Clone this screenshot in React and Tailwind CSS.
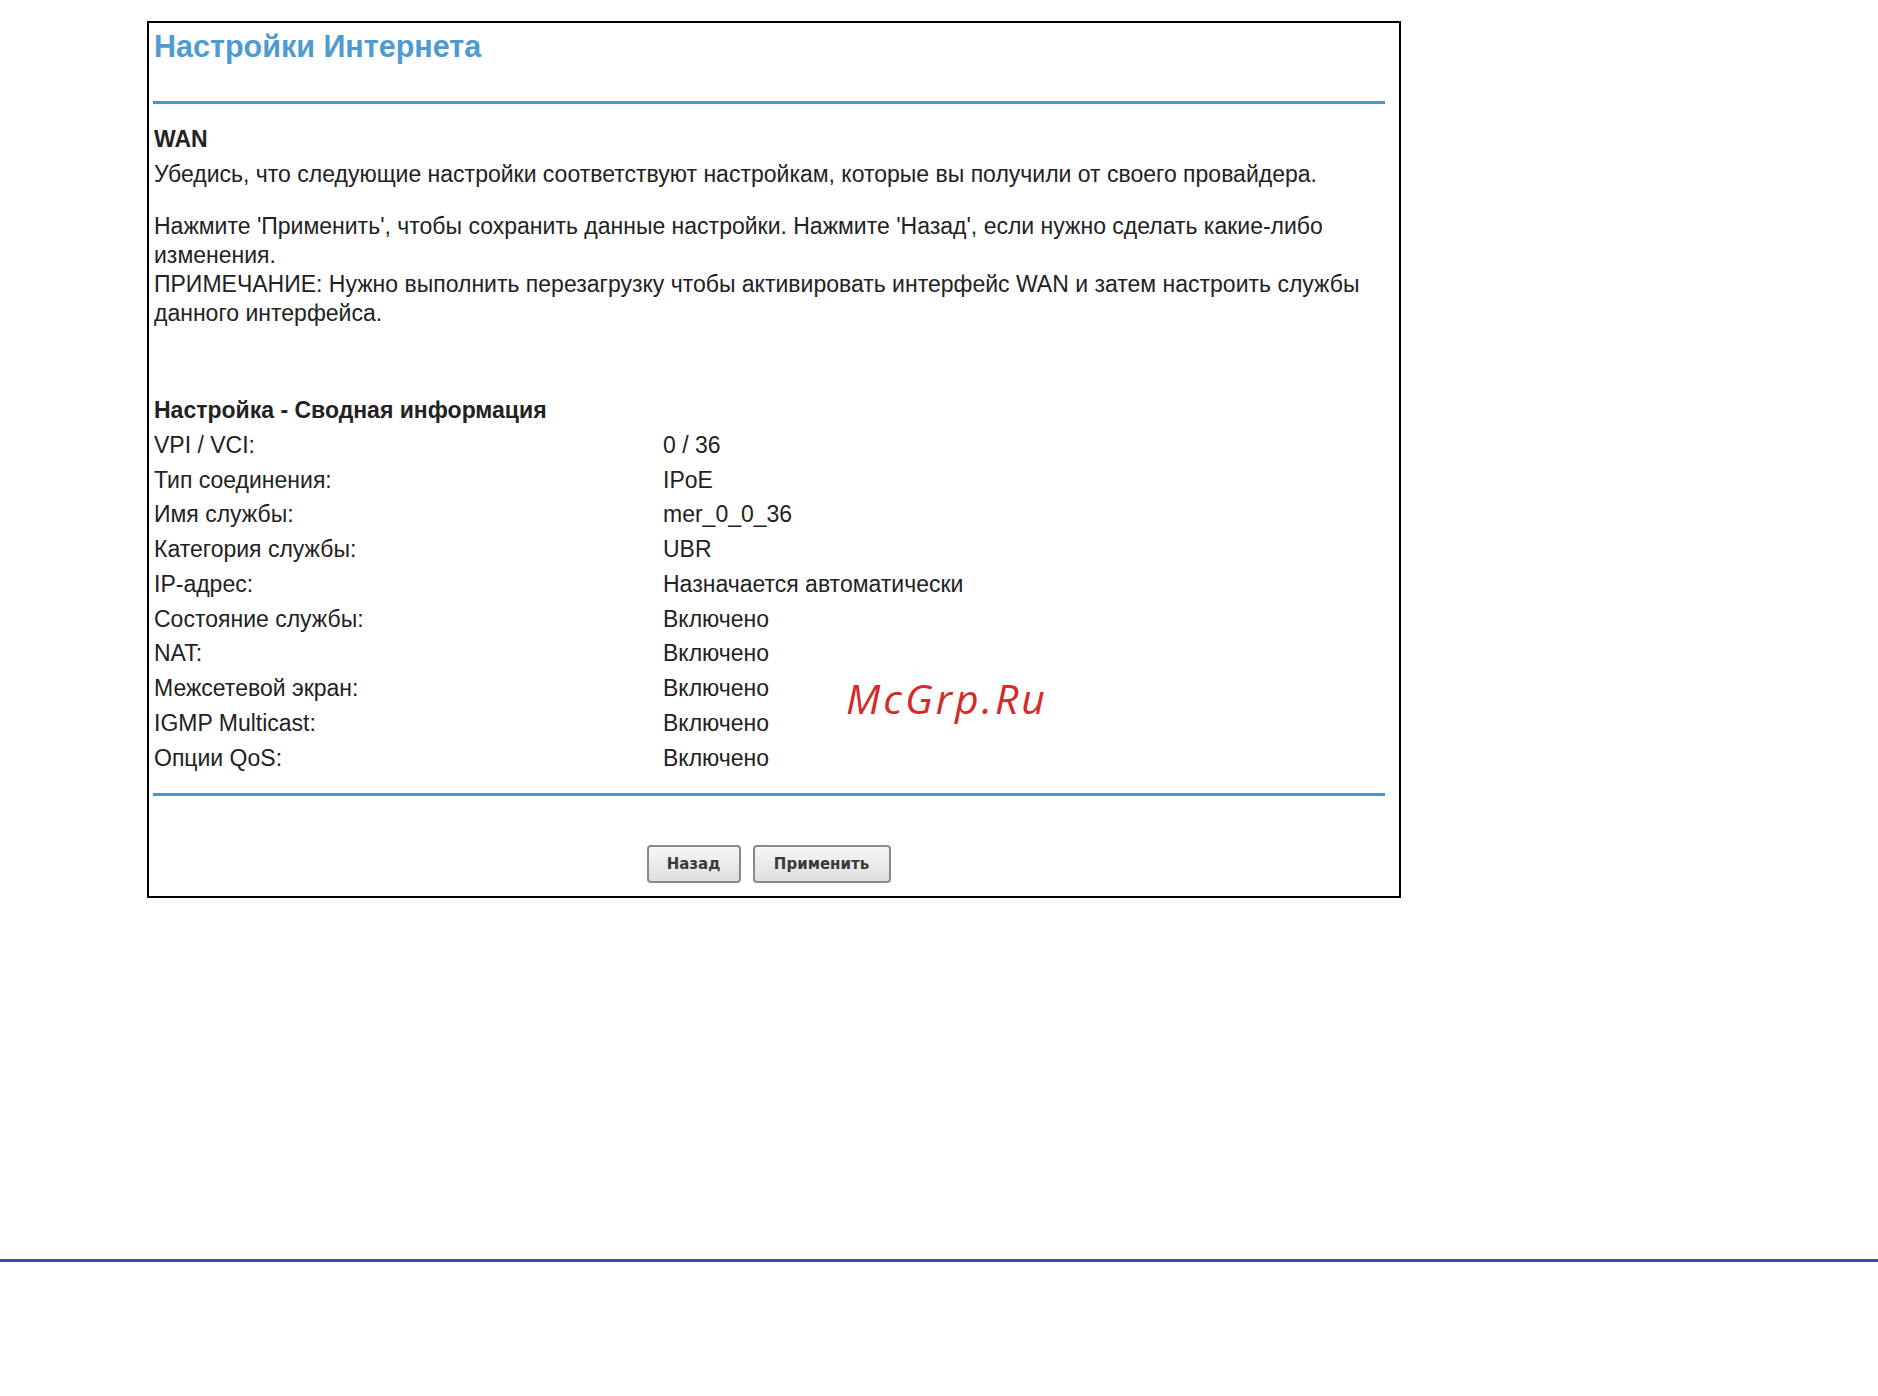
import React from "react";

const rows = [
  ["VPI / VCI:", "0 / 36"],
  ["Тип соединения:", "IPoE"],
  ["Имя службы:", "mer_0_0_36"],
  ["Категория службы:", "UBR"],
  ["IP-адрес:", "Назначается автоматически"],
  ["Состояние службы:", "Включено"],
  ["NAT:", "Включено"],
  ["Межсетевой экран:", "Включено"],
  ["IGMP Multicast:", "Включено"],
  ["Опции QoS:", "Включено"],
];

const App = () => {
  return (
    <div className="relative min-h-[1396px] bg-white pt-[21px] font-['Liberation_Sans',Arial,sans-serif] text-[#222]">
      <div className="ml-[147px] w-[1254px] border-2 border-black pl-[5px] pr-[14px] pb-[13px]">
        <h1 className="mt-[5px] text-[30.5px] font-bold leading-[36px] text-[#4d9bd1]">Настройки Интернета</h1>
        <div className="-ml-px mt-[37px] h-[3px] bg-[#4896cf]" />

        <div className="mt-[21px] text-[23px] leading-[29px]">
          <div className="font-bold">WAN</div>
          <p className="mt-[6px]">
            Убедись, что следующие настройки соответствуют настройкам, которые вы получили от своего провайдера.
          </p>
          <p className="mt-[23px]">
            Нажмите 'Применить', чтобы сохранить данные настройки. Нажмите 'Назад', если нужно сделать какие-либо
            изменения.
            <br />
            ПРИМЕЧАНИЕ: Нужно выполнить перезагрузку чтобы активировать интерфейс WAN и затем настроить службы
            данного интерфейса.
          </p>
        </div>

        <div className="mt-[65px] grid grid-cols-[509px_1fr] text-[23px]">
          <div className="col-span-2 flex h-[34.75px] items-center font-bold">Настройка - Сводная информация</div>
          {rows.map(([label, value]) => (
            <React.Fragment key={label}>
              <div className="flex h-[34.75px] items-center">{label}</div>
              <div className="flex h-[34.75px] items-center">{value}</div>
            </React.Fragment>
          ))}
        </div>

        <div className="-ml-px mt-[18px] h-[3px] bg-[#4896cf]" />

        <div className="mt-[49px] flex justify-center gap-[12px] pr-[2px] font-['DejaVu_Sans',Verdana,sans-serif]">
          <button className="h-[38px] w-[94px] rounded-[4px] border-2 border-[#8a8a8a] bg-gradient-to-b from-[#f7f7f7] to-[#dedede] text-[15px] font-bold text-[#3a3a3a]">
            Назад
          </button>
          <button className="h-[38px] w-[138px] rounded-[4px] border-2 border-[#8a8a8a] bg-gradient-to-b from-[#f7f7f7] to-[#dedede] text-[15px] font-bold text-[#3a3a3a]">
            Применить
          </button>
        </div>
      </div>

      <div className="mt-[361px] h-[3px] w-full bg-[#3f4aaa]" />

      <div className="absolute left-[846px] top-[672px] font-['Open_Sans',sans-serif] text-[41px] italic leading-[52px] tracking-[3px] text-[#d42a2a]">
        McGrp.Ru
      </div>
    </div>
  );
};

export default App;
